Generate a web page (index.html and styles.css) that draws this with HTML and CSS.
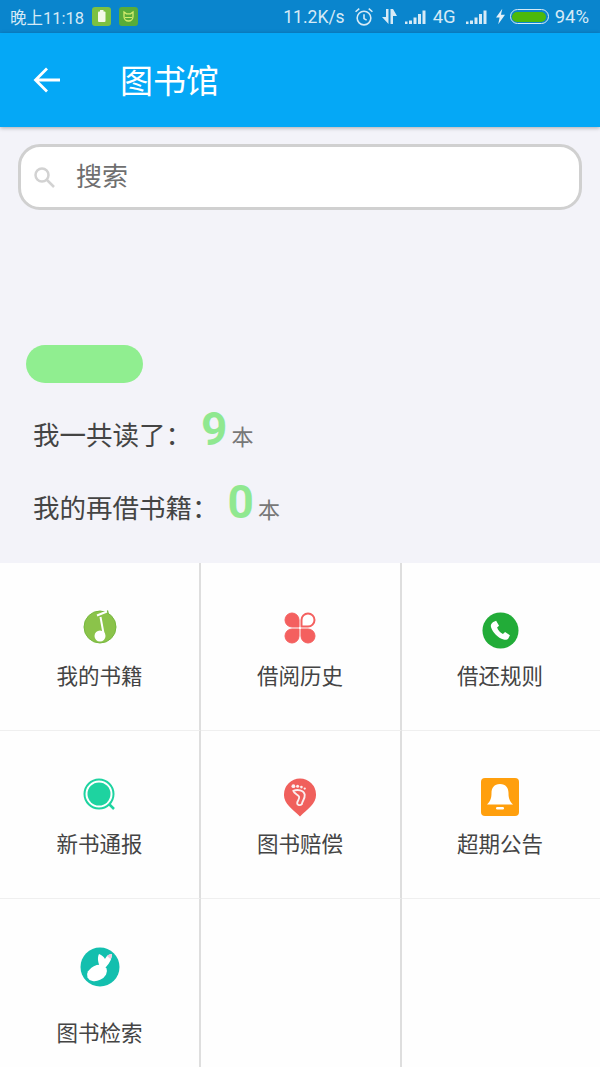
FILE: index.html
```html
<!DOCTYPE html>
<html lang="zh">
<head>
<meta charset="utf-8">
<title>图书馆</title>
<link rel="stylesheet" href="styles.css">
</head>
<body>
<div class="phone">
  <header class="status">
    <div class="status-left">
      <span>晚上11:18</span>
      <svg width="19" height="19" viewBox="0 0 19 19"><rect width="19" height="19" rx="3" fill="#7cc142"/><rect x="6" y="4.500" width="7.500" height="10.500" rx="1" fill="#f4f8e8"/><rect x="8" y="3" width="3.500" height="2" fill="#f4f8e8"/></svg>
      <svg width="19" height="19" viewBox="0 0 19 19"><rect width="19" height="19" rx="3" fill="#58ac3a"/><path d="M5 9.500L5 5l2.500 1.800h4L14 5v4.500a4.500 4.500 0 0 1-9 0z" fill="none" stroke="#d4ec6c" stroke-width="1.300"/><path d="M6 10.500h7" stroke="#d4ec6c" stroke-width="1"/></svg>
    </div>
    <div class="status-right">
      <span>11.2K/s</span>
      <svg class="gap-10" width="20" height="20" viewBox="0 0 19 19" fill="none" stroke="#d6eaf6" stroke-width="1.500"><circle cx="9.500" cy="10.500" r="6.500"/><path d="M9.500 7v4l2.500 1.500M1.500 4.500L5 1.500M17.500 4.500L14 1.500"/></svg>
      <svg width="15" height="17" viewBox="0 0 15 17" fill="#d6eaf6"><path d="M4 1h2.500v15L0 9h4zM8.500 1H11l4 7h-4v8H8.500z"/></svg>
      <svg width="21" height="14" viewBox="0 0 21 14" fill="#d6eaf6"><path d="M0 11.500h2.500V14H0zM4 10.500h3V14H4zM8.500 7.500h3V14h-3zM13 4h3v10h-3zM17.500 .5h3V14h-3z"/></svg>
      <span class="gap-7 text-large">4G</span>
      <svg class="gap-11" width="21" height="14" viewBox="0 0 21 14" fill="#d6eaf6"><path d="M0 11.500h2.500V14H0zM4 10.500h3V14H4zM8.500 7.500h3V14h-3zM13 4h3v10h-3zM17.500 .5h3V14h-3z"/></svg>
      <svg class="gap-10" width="9" height="17" viewBox="0 0 10 17" fill="#e4f0f8"><path d="M7 0L0 9.500h4L2.500 17 10 6.500H5.500z"/></svg>
      <div class="battery gap-5"><div class="battery-fill"></div></div>
      <span class="gap-6 text-large">94%</span>
    </div>
  </header>
  <div class="appbar">
    <svg class="back" width="27" height="26" viewBox="0 0 27 26" fill="none" stroke="#fff" stroke-width="2.800"><path d="M2 13h25M14 1.500L2.500 13 14 24.500"/></svg>
    <h1 class="title">图书馆</h1>
  </div>
  <main class="content">
    <div class="search">
      <svg width="22" height="22" viewBox="0 0 22 22" fill="none" stroke="#d2d2d2" stroke-width="2.500"><circle cx="9" cy="9" r="6.500"/><path d="M13.500 13.500L21 21"/></svg>
      <span class="search-text">搜索</span>
    </div>
    <div class="pill"></div>
    <div class="stat stat-first"><span class="stat-label">我一共读了：</span><span class="stat-num">9</span><span class="stat-unit">本</span></div>
    <div class="stat stat-second"><span class="stat-label">我的再借书籍：</span><span class="stat-num">0</span><span class="stat-unit">本</span></div>
  </main>
  <section class="grid">
    <div class="cell">
      <div class="ic-box"><svg class="up-1" width="36" height="38" viewBox="0 0 36 38"><path d="M22 5l4-3 1 4z" fill="#76b83e"/><circle cx="18" cy="19" r="16" fill="#8bc34a" stroke="#76b83e"/><path d="M15 7.500L25 3.500M18.500 9L22 28" fill="none" stroke="#fff" stroke-width="2"/><circle cx="18" cy="28" r="5.500" fill="#fff"/></svg></div>
      <span class="cell-label">我的书籍</span>
    </div>
    <div class="cell">
      <div class="ic-box"><svg width="32" height="32" viewBox="0 0 32 32" fill="#f4605f" stroke="#f4605f" stroke-width="1" stroke-linejoin="round"><path d="M15 15H8a7 7 0 1 1 7-7z"/><path d="M15 17v7a7 7 0 1 1-7-7z"/><path d="M17 17h7a7 7 0 1 1-7 7z"/><path d="M17.500 14.500V8a6.500 6.500 0 1 1 6.500 6.500z" fill="#fff" stroke-width="2"/></svg></div>
      <span class="cell-label">借阅历史</span>
    </div>
    <div class="cell">
      <div class="ic-box"><svg class="down-2" width="37" height="37" viewBox="0 0 38 38"><circle cx="19" cy="19" r="18.500" fill="#22ac38"/><path d="M11 10.500l3.500-1.500 3 5-2 2c1 3 3 5 6 6.500l2.200-2 5 3.500-1.500 3c-1 1.500-3 2-5 1.300-6-2-11-7-13-13-.5-2 .5-3.500 2-4.800z" fill="#fff"/></svg></div>
      <span class="cell-label">借还规则</span>
    </div>
    <div class="cell">
      <div class="ic-box"><svg width="34" height="36" viewBox="0 0 34 36"><circle cx="16" cy="16" r="14.500" fill="#fff" stroke="#1ed3a0" stroke-width="2"/><circle cx="16" cy="16" r="11.500" fill="#1ed3a0"/><path d="M26 26l5 5" stroke="#1ed3a0" stroke-width="2.500"/></svg></div>
      <span class="cell-label">新书通报</span>
    </div>
    <div class="cell">
      <div class="ic-box"><svg class="down-1" width="34" height="39" viewBox="0 0 36 40"><path d="M18 40C10 32 1 27 1 17a17 17 0 0 1 34 0c0 10-9 15-17 23z" fill="#f0605c"/><g fill="#fbeeee"><circle cx="11" cy="8" r="2"/><circle cx="15.500" cy="8" r="1.600"/><circle cx="19.500" cy="9" r="1.400"/><circle cx="23" cy="10.500" r="1.200"/></g><path d="M11 13c4-2 11-1 12 4 .5 5-3 7-3 10-2 2-5 1-5-1 0-3 3-4 2-7-1-2-5-3-6-6z" fill="none" stroke="#fbeeee" stroke-width="2"/></svg></div>
      <span class="cell-label">图书赔偿</span>
    </div>
    <div class="cell">
      <div class="ic-box"><svg class="down-1" width="38" height="38" viewBox="0 0 38 38"><rect width="38" height="38" rx="4" fill="#ff9f0d"/><path d="M19 6c6 0 8.500 4 8.500 9 0 5 1 8 4.500 11.500H6C9.500 23 10.500 20 10.500 15c0-5 2.500-9 8.500-9z" fill="#fff"/><rect x="15" y="29" width="8" height="2.500" rx="1.200" fill="#fff"/></svg></div>
      <span class="cell-label">超期公告</span>
    </div>
    <div class="cell cell-last">
      <div class="ic-box"><svg width="40" height="40" viewBox="0 0 40 40"><circle cx="20" cy="20" r="19.500" fill="#13bfae"/><ellipse cx="17" cy="26" rx="10.500" ry="7.500" transform="rotate(-25 17 26)" fill="#fff"/><path d="M21 22C18 16 17 11 19 7c3 1 5 3 6 5 1-2 3-5 7-5 0 4-2 9-6 13z" fill="#fff"/><path d="M27 9c1-1 3-2 5-2 0 2-.5 3-1.500 5z" fill="#f5c6dc"/></svg></div>
      <span class="cell-label">图书检索</span>
    </div>
    <div class="cell cell-last"></div>
    <div class="cell cell-last"></div>
  </section>
</div>
</body>
</html>
```

FILE: styles.css
```css
* { box-sizing: border-box; }
html, body { margin: 0; padding: 0; }
body {
  font-family: "Noto Sans CJK SC", "Noto Sans", sans-serif;
  background: #f3f3f9;
}
.phone { width: 600px; height: 1067px; overflow: hidden; display: flex; flex-direction: column; }
.status {
  height: 33px;
  flex: none;
  background: #0a85cd;
  color: #d6eaf6;
  font-family: Roboto, "Noto Sans CJK SC", sans-serif;
  font-size: 16.500px;
  display: flex;
  align-items: center;
  justify-content: space-between;
  padding: 0 11px 0 10px;
}
.status-left, .status-right { display: flex; align-items: center; }
.status-left { gap: 8px; }
.status-right { gap: 8px; font-size: 17.500px; }
.text-large { font-size: 18.500px; }
.gap-10 { margin-left: 1px; }
.gap-11 { margin-left: 2px; }
.gap-7 { margin-left: -1px; }
.gap-5 { margin-left: -3px; }
.gap-6 { margin-left: -2px; }
.status-right .gap-10 + svg { flex: none; }
.battery {
  width: 39px; height: 15px;
  border: 1px solid #d6eaf6;
  border-radius: 8px;
  padding: 1.500px;
}
.battery-fill { width: 100%; height: 100%; background: #4cb90c; border-radius: 6px; }
.appbar {
  height: 94px;
  flex: none;
  background: #05a8f6;
  display: flex;
  align-items: center;
  padding-left: 33px;
  box-shadow: 0 1px 4px rgba(0,0,0,.3);
  position: relative;
}
.back { flex: none; margin-top: -1px; }
.title {
  margin: -3px 0 0 60px;
  font-size: 33px;
  font-weight: 400;
  color: #fff;
  line-height: 40px;
}
.content { flex: none; height: 436px; padding: 17px 18px 0; }
.search {
  height: 66px;
  background: #fff;
  border: 3px solid #d0d0d0;
  border-radius: 22px;
  display: flex;
  align-items: center;
  padding-left: 12px;
}
.search-text { margin-left: 21px; font-size: 26px; color: #6f6f6f; line-height: 34px; margin-top: -4px; }
.pill {
  width: 117px; height: 38px;
  margin: 135px 0 0 8px;
  border-radius: 19px;
  background: #90ee90;
}
.stat { display: flex; align-items: baseline; padding-left: 15px; color: #444; }
.stat-first { margin-top: 16px; height: 60px; }
.stat-second { margin-top: 13px; height: 60px; }
.stat-label { font-size: 26.500px; line-height: 60px; }
.stat-num {
  font-family: Roboto, sans-serif;
  font-weight: 700;
  font-size: 46px;
  color: #90e890;
  margin-left: 9px;
  line-height: 60px;
}
.stat-unit { font-size: 22px; color: #777; margin-left: 4px; }
.grid {
  flex: 1;
  display: grid;
  grid-template-columns: 201px 201px 198px;
  grid-template-rows: 168px 168px 168px;
  background: #fefefe;
}
.cell {
  display: flex;
  flex-direction: column;
  align-items: center;
  border-right: 2px solid #dedede;
  border-bottom: 1px solid #efefef;
  padding-top: 45px;
}
.cell:nth-child(3n+2) { padding-right: 1px; }
.cell:nth-child(3n) { border-right: 0; padding-right: 2px; }
.ic-box { height: 40px; flex: none; display: flex; align-items: center; justify-content: center; margin-bottom: 12px; }
.up-1 { margin-bottom: 2px; }
.down-1 { margin-top: 2px; }
.down-2 { margin-top: 4px; }
.cell-label { font-size: 21.500px; line-height: 30px; color: #444; }
.cell-last { border-bottom: 0; padding-top: 48px; }
.cell-last .ic-box { margin-bottom: 30px; }
```
